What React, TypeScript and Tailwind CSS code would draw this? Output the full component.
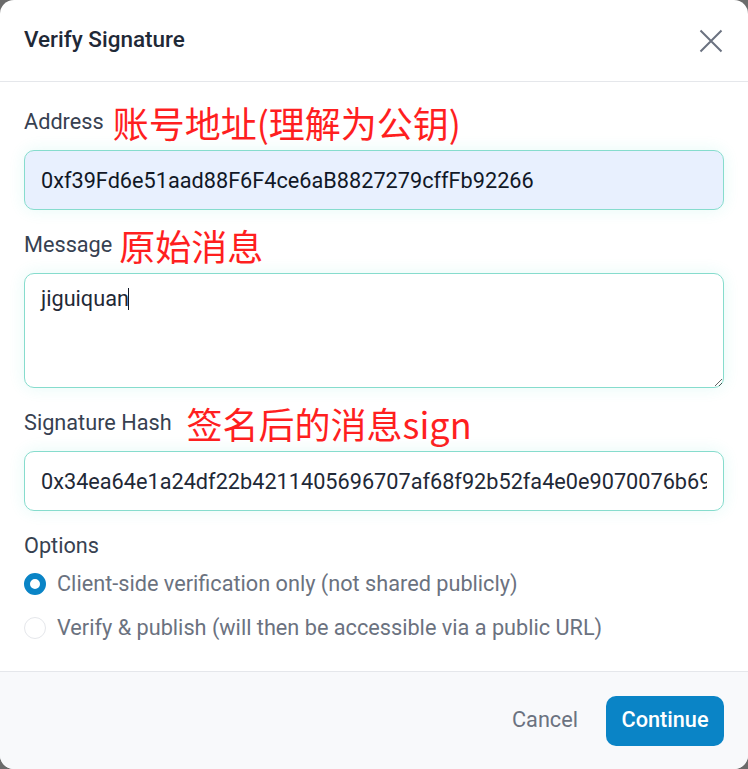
import React from 'react';

const font = { fontFamily: 'Roboto, "Noto Sans CJK SC", sans-serif' };

function Note({ children, className = '' }: { children: React.ReactNode; className?: string }) {
    // red annotation drawn over the screenshot
    return (
        <span
            className={`text-[36px] leading-none text-[#ff1f1f] whitespace-nowrap ${className}`}
            style={{ fontFamily: '"Noto Sans CJK SC", sans-serif' }}
        >
            {children}
        </span>
    );
}

function Label({ text, note, gap }: { text: string; note: string; gap: string }) {
    return (
        <div className="h-6 flex items-center">
            <span className="text-[21.7px] text-[#374151] leading-none">{text}</span>
            <Note className={gap}>{note}</Note>
        </div>
    );
}

function Radio({ checked, label }: { checked: boolean; label: string }) {
    return (
        <div className="h-6 flex items-center gap-[11px]">
            <span
                className={`w-[22px] h-[22px] rounded-full bg-white shrink-0 ${checked ? 'border-[6px] border-[#0a84c6]' : 'border border-[#e5e7eb]'}`}
            ></span>
            <span className="text-[21.7px] text-[#6b7280] leading-none">{label}</span>
        </div>
    );
}

export default function App() {
    return (
        <div className="w-[748px] h-[769px] bg-[#6b6b6b]" style={font}>
            <div className="w-full h-full bg-white rounded-[14px] overflow-hidden flex flex-col">
                {/* Header */}
                <div className="h-[82px] shrink-0 border-b border-[#e5e7eb] px-6 flex items-center justify-between">
                    <h1 className="text-[22.5px] font-medium text-[#1f2937] pb-[2px]">Verify Signature</h1>
                    <svg width="24" height="24" viewBox="0 0 24 24" className="mr-[1px]">
                        <path d="M1.5 1.5 L22.5 22.5 M22.5 1.5 L1.5 22.5" stroke="#6b7280" strokeWidth="2" fill="none" />
                    </svg>
                </div>

                {/* Body */}
                <div className="flex-1 px-6 pt-[28px]">
                    <Label text="Address" note="账号地址(理解为公钥)" gap="ml-[9px]" />
                    <input
                        readOnly
                        value="0xf39Fd6e51aad88F6F4ce6aB8827279cffFb92266"
                        className="mt-4 w-full h-[60px] rounded-[10px] border border-[#86dccd] bg-[#e8f0fe] px-4 text-[21.7px] text-[#111827] outline-none shadow-[0_0_16px_rgba(45,212,191,0.12)]"
                    />

                    <div className="mt-[23px]">
                        <Label text="Message" note="原始消息" gap="ml-[7px]" />
                    </div>
                    <div className="relative mt-4">
                        <textarea
                            readOnly
                            value="jiguiquan"
                            className="block w-full h-[115px] rounded-[10px] border border-[#86dccd] bg-white px-4 pt-[11px] text-[21.7px] leading-7 text-[#1f2937] outline-none shadow-[0_0_16px_rgba(45,212,191,0.12)]"
                        />
                        <span className="absolute left-[104px] top-[15px] w-px h-[22px] bg-[#111827]"></span>
                    </div>

                    <div className="mt-[23px]">
                        <Label text="Signature Hash" note="签名后的消息sign" gap="ml-[15px]" />
                    </div>
                    <input
                        readOnly
                        value="0x34ea64e1a24df22b4211405696707af68f92b52fa4e0e9070076b69a1b7f1e5d3f"
                        className="mt-4 w-full h-[60px] rounded-[10px] border border-[#86dccd] bg-white px-4 text-[21.7px] text-[#1f2937] outline-none shadow-[0_0_16px_rgba(45,212,191,0.12)]"
                    />

                    <div className="mt-[23px] h-6 flex items-center">
                        <span className="text-[21.7px] text-[#374151] leading-none">Options</span>
                    </div>
                    <div className="mt-[14px] flex flex-col gap-5">
                        <Radio checked label="Client-side verification only (not shared publicly)" />
                        <Radio checked={false} label="Verify & publish (will then be accessible via a public URL)" />
                    </div>
                </div>

                {/* Footer */}
                <div className="h-[98px] shrink-0 border-t border-[#e5e7eb] bg-[#f8f9fb] px-6 flex items-center justify-end gap-7">
                    <button className="text-[21.7px] text-[#6b7280]">Cancel</button>
                    <button className="w-[118px] h-[50px] rounded-[10px] bg-[#0a84c6] text-white text-[21.7px] font-medium">
                        Continue
                    </button>
                </div>
            </div>
        </div>
    );
}
